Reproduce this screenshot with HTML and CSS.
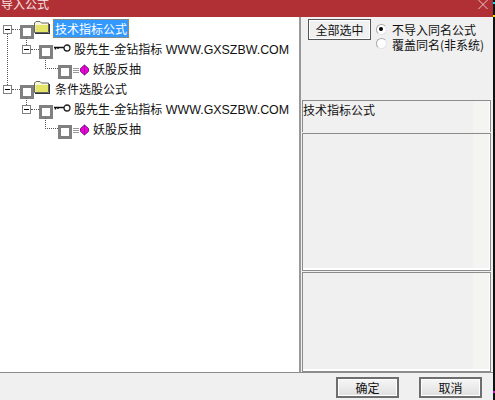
FILE: index.html
```html
<!DOCTYPE html>
<html lang="zh">
<head>
<meta charset="utf-8">
<title>导入公式</title>
<link rel="stylesheet" href="styles.css">
</head>
<body>
<div class="screen">
  <div class="window">
    <header class="titlebar">
      <span class="title">导入公式</span>
      <svg class="close" width="10" height="10" viewBox="0 0 10 10"><path d="M0.5 0 9.5 9M9.5 0 0.5 9" stroke="#eac4c4" stroke-width="1" fill="none"/></svg>
    </header>
    <main class="main">
      <section class="tree">
        <div class="vline-root"></div>
        <div class="row lvl0">
          <span class="exp"></span><span class="dots"></span><span class="check"></span>
          <svg class="folder" width="16" height="13" viewBox="0 0 16 13"><path d="M0.5 11.5V2L2 0.5H6L7.5 2H14.5V11.5Z" fill="#f6f6d8" stroke="#666"/><rect x="1.5" y="4" width="12.5" height="7" fill="#e4e468"/><path d="M1 12.5H16M15.5 3V13" stroke="#333" fill="none"/></svg>
          <span class="label selected">技术指标公式</span>
        </div>
        <div class="row lvl1">
          <span class="exp"></span><span class="dots"></span><span class="check"></span>
          <svg class="key" width="17" height="8" viewBox="0 0 17 8"><path d="M0 3.5H10M1.5 3.5V5.5M4 3.5V5" stroke="#111" stroke-width="1.4" fill="none"/><circle cx="13" cy="4" r="3" fill="#fff" stroke="#222" stroke-width="1.3"/></svg>
          <span class="label">股先生-金钻指标 <span class="latin">WWW.GXSZBW.COM</span></span>
        </div>
        <div class="row lvl2">
          <span class="elbow"></span><span class="check"></span>
          <svg class="gem" width="16" height="12" viewBox="0 0 16 12"><path d="M0 4.5H6M0 6.5H6M0 8.5H6" stroke="#999" fill="none"/><path d="M11.5 1 15.5 4.5V7.5L11.5 11 7.5 7.5V4.5Z" fill="#f000d8" stroke="#702088"/><path d="M11.5 1V11" stroke="#b000a8" fill="none"/></svg>
          <span class="label">妖股反抽</span>
        </div>
        <div class="row lvl0">
          <span class="exp"></span><span class="dots"></span><span class="check"></span>
          <svg class="folder" width="16" height="13" viewBox="0 0 16 13"><path d="M0.5 11.5V2L2 0.5H6L7.5 2H14.5V11.5Z" fill="#f6f6d8" stroke="#666"/><rect x="1.5" y="4" width="12.5" height="7" fill="#e4e468"/><path d="M1 12.5H16M15.5 3V13" stroke="#333" fill="none"/></svg>
          <span class="label">条件选股公式</span>
        </div>
        <div class="row lvl1">
          <span class="exp"></span><span class="dots"></span><span class="check"></span>
          <svg class="key" width="17" height="8" viewBox="0 0 17 8"><path d="M0 3.5H10M1.5 3.5V5.5M4 3.5V5" stroke="#111" stroke-width="1.4" fill="none"/><circle cx="13" cy="4" r="3" fill="#fff" stroke="#222" stroke-width="1.3"/></svg>
          <span class="label">股先生-金钻指标 <span class="latin">WWW.GXSZBW.COM</span></span>
        </div>
        <div class="row lvl2">
          <span class="elbow"></span><span class="check"></span>
          <svg class="gem" width="16" height="12" viewBox="0 0 16 12"><path d="M0 4.5H6M0 6.5H6M0 8.5H6" stroke="#999" fill="none"/><path d="M11.5 1 15.5 4.5V7.5L11.5 11 7.5 7.5V4.5Z" fill="#f000d8" stroke="#702088"/><path d="M11.5 1V11" stroke="#b000a8" fill="none"/></svg>
          <span class="label">妖股反抽</span>
        </div>
      </section>
      <aside class="side">
        <div class="options">
          <button class="btn-all" type="button">全部选中</button>
          <div class="radios">
            <div class="radio-row"><span class="radio on"></span><span class="radio-text">不导入同名公式</span></div>
            <div class="radio-row"><span class="radio"></span><span class="radio-text">覆盖同名(非系统)</span></div>
          </div>
        </div>
        <div class="panel panel-name">技术指标公式</div>
        <div class="panel panel-mid"></div>
        <div class="panel panel-low"></div>
      </aside>
    </main>
    <footer class="footer">
      <button class="btn" type="button">确定</button>
      <button class="btn" type="button">取消</button>
    </footer>
  </div>
  <div class="edge">
    <i class="mark cyan"></i>
    <i class="mark yellow"></i>
    <i class="mark magenta"></i>
  </div>
</div>
</body>
</html>
```
FILE: styles.css
```css
* { box-sizing: border-box; }
html, body { margin: 0; padding: 0; }
body {
  width: 495px;
  height: 400px;
  overflow: hidden;
  background: #f0f0f0;
  font-family: "Noto Sans CJK SC", "Liberation Sans", sans-serif;
  font-size: 12px;
  color: #111;
}
.screen { display: flex; width: 495px; height: 400px; }
.window { width: 493px; height: 400px; display: flex; flex-direction: column; }
.edge { width: 2px; height: 400px; background: #111; position: relative; }
.mark { position: absolute; left: 0; width: 2px; height: 2px; }
.cyan { top: 2px; background: #00e8f0; }
.yellow { top: 15px; background: #f8e800; }
.magenta { top: 391px; background: #d020d0; }

.titlebar {
  height: 17px;
  flex: none;
  background: #b03035;
  display: flex;
  justify-content: space-between;
  align-items: flex-start;
  overflow: hidden;
  padding: 0 5px 0 1px;
  color: #f4e4e4;
}
.title { line-height: 12px; margin-top: -2px; }

.main { height: 355px; flex: none; display: flex; }
.tree {
  width: 301px;
  flex: none;
  position: relative;
  background: #fff;
  border-right: 2px solid #999;
  padding-top: 3px;
}
.vline-root {
  position: absolute;
  left: 7px;
  top: 17px;
  height: 51px;
  border-left: 1px dotted #555;
}
.row { display: flex; align-items: flex-start; height: 20px; position: relative; }
.lvl0 { padding-left: 3px; }
.lvl1 { padding-left: 22px; }
.lvl2 { padding-left: 45px; }
.exp {
  width: 9px;
  height: 9px;
  margin-top: 5px;
  flex: none;
  border: 1px solid #808080;
  background: linear-gradient(#000, #000) center / 5px 1px no-repeat #fff;
  position: relative;
}
.dots { width: 8px; margin-top: 9px; flex: none; border-top: 1px dotted #555; }
.elbow {
  width: 13px;
  height: 11px;
  flex: none;
  margin-top: -2px;
  border-left: 1px dotted #555;
  border-bottom: 1px dotted #555;
}
.check {
  width: 14px;
  height: 14px;
  margin-top: 5px;
  flex: none;
  border: 3px solid #808080;
  background: #fff;
}
.lvl1 .exp::before {
  content: "";
  position: absolute;
  left: 3px;
  top: -8px;
  height: 7px;
  border-left: 1px dotted #555;
}
.folder { margin: 1px 0 0 0; flex: none; }
.key { margin: 4px 0 0 1px; flex: none; }
.gem { margin: 4px 0 0 1px; flex: none; }
.label { white-space: nowrap; line-height: 19px; margin-top: -1px; }
.lvl0 .label { margin-left: 3px; padding: 0 2px; }
.lvl1 .label { margin-left: 3px; }
.lvl2 .label { margin-left: 4px; }
.latin { font-family: "Liberation Sans", sans-serif; font-size: 12.4px; margin-left: 1px; }
.selected {
  background: #3399ff;
  color: #fff;
  outline: 1px dotted #d08020;
  outline-offset: -1px;
}

.side {
  flex: 1;
  display: flex;
  flex-direction: column;
  padding: 0 2px 0 1px;
}
.options { height: 83px; flex: none; display: flex; padding: 2px 0 0 6px; }
.btn-all {
  width: 63px;
  height: 21px;
  font: inherit;
  color: inherit;
  padding: 0;
  background: #f0f0f0;
  border: 1px solid #555;
  box-shadow: inset 0 0 0 1px #fff;
}
.radios { margin-left: 5px; padding-top: 4px; }
.radio-row { display: flex; align-items: center; height: 14.5px; gap: 5px; white-space: nowrap; }
.radio-text { line-height: 14px; }
.radio {
  width: 11px;
  height: 11px;
  flex: none;
  margin-top: -2px;
  border-radius: 50%;
  background: #fff;
  border: 1.5px solid #a8a8a8;
  border-right-color: #e4e4e4;
  border-bottom-color: #e4e4e4;
  position: relative;
}
.radio.on::after {
  content: "";
  position: absolute;
  left: 2px;
  top: 2px;
  width: 4px;
  height: 4px;
  border-radius: 50%;
  background: #000;
}
.panel {
  border: 1px solid #8c8c8c;
  background: linear-gradient(to right, #f0f0f0 170px, #f4f4f2 170px);
  box-shadow: inset -1px -2px 0 #fff;
}
.panel-name { height: 32px; line-height: 17px; border-bottom: 0; box-shadow: inset -1px 0 0 #fff; }
.panel-mid { height: 138px; margin-top: 1px; }
.panel-low { height: 100px; margin-top: 1px; }

.footer {
  flex: 1;
  border-top: 1px solid #8c8c8c;
  display: flex;
  justify-content: flex-end;
  gap: 20px;
  padding: 4px 11px 0 0;
}
.btn {
  width: 63px;
  height: 21px;
  font: inherit;
  color: inherit;
  padding: 0;
  border: 2px solid #6e6e6e;
  background: linear-gradient(#f6f6f6, #e0e0e0);
  box-shadow: inset 0 0 0 1px #fff;
}
```
